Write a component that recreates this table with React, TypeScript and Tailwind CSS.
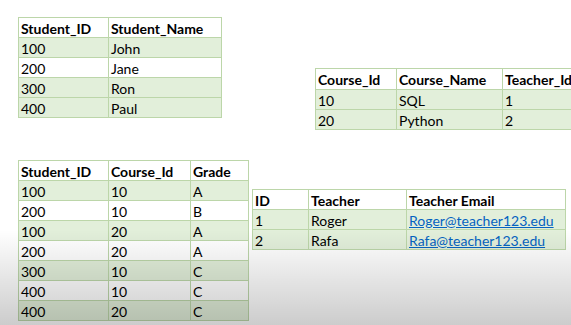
import React from "react";

type Cell = string | { email: string };

function Sheet({
  width,
  cols,
  header,
  rows,
  fills,
  headH = "h-[20px]",
}: {
  width: string;
  cols: string[];
  header: string[];
  rows: Cell[][];
  fills: boolean[];
  headH?: string;
}) {
  return (
    <table className={`border-collapse table-fixed shrink-0 ${width}`}>
      <colgroup>
        {cols.map((w, i) => (
          <col key={i} className={w} />
        ))}
      </colgroup>
      <thead>
        <tr className={`${headH} bg-white`}>
          {header.map((h) => (
            <th
              key={h}
              className="border border-[#bcd6a9] px-[2px] pt-[2px] text-left font-bold leading-none whitespace-nowrap"
            >
              {h}
            </th>
          ))}
        </tr>
      </thead>
      <tbody>
        {rows.map((r, i) => (
          <tr
            key={i}
            className={`h-[20px] ${fills[i] ? "bg-[#e2efda]" : "bg-white"}`}
          >
            {r.map((c, j) => (
              <td
                key={j}
                className="border border-[#bcd6a9] px-[2px] pt-[2px] leading-none whitespace-nowrap"
              >
                {typeof c === "string" ? (
                  c
                ) : (
                  <span className="text-[#0563c1] underline">{c.email}</span>
                )}
              </td>
            ))}
          </tr>
        ))}
      </tbody>
    </table>
  );
}

export default function App() {
  return (
    <div
      className="relative w-[571px] h-[325px] overflow-hidden bg-white text-[14px] text-black"
      style={{ fontFamily: "Lato, 'Open Sans', sans-serif" }}
    >
      <div className="flex flex-col pl-[18px] pt-[17px]">
        <div className="flex items-start h-[143px]">
          <Sheet
            width="w-[203px]"
            cols={["w-[90px]", "w-[113px]"]}
            header={["Student_ID", "Student_Name"]}
            rows={[
              ["100", "John"],
              ["200", "Jane"],
              ["300", "Ron"],
              ["400", "Paul"],
            ]}
            fills={[true, false, true, true]}
          />
          <div className="ml-[93px] mt-[51px]">
            <Sheet
              width="w-[277px]"
              cols={["w-[81px]", "w-[106px]", "w-[90px]"]}
              header={["Course_Id", "Course_Name", "Teacher_Id"]}
              rows={[
                ["10", "SQL", "1"],
                ["20", "Python", "2"],
              ]}
              fills={[true, true]}
              headH="h-[21px]"
            />
          </div>
        </div>
        <div className="flex items-start">
          <Sheet
            width="w-[230px]"
            cols={["w-[90px]", "w-[82px]", "w-[58px]"]}
            header={["Student_ID", "Course_Id", "Grade"]}
            rows={[
              ["100", "10", "A"],
              ["200", "10", "B"],
              ["100", "20", "A"],
              ["200", "20", "A"],
              ["300", "10", "C"],
              ["400", "10", "C"],
              ["400", "20", "C"],
            ]}
            fills={[true, false, true, false, true, false, true]}
          />
          <div className="ml-[3px] mt-[29px]">
            <Sheet
              width="w-[313px]"
              cols={["w-[56px]", "w-[98px]", "w-[159px]"]}
              header={["ID", "Teacher", "Teacher Email"]}
              rows={[
                ["1", "Roger", { email: "Roger@teacher123.edu" }],
                ["2", "Rafa", { email: "Rafa@teacher123.edu" }],
              ]}
              fills={[true, true]}
            />
          </div>
        </div>
      </div>
      <div className="pointer-events-none absolute inset-x-0 bottom-0 h-[95px] bg-linear-to-b from-black/0 to-black/20" />
    </div>
  );
}
